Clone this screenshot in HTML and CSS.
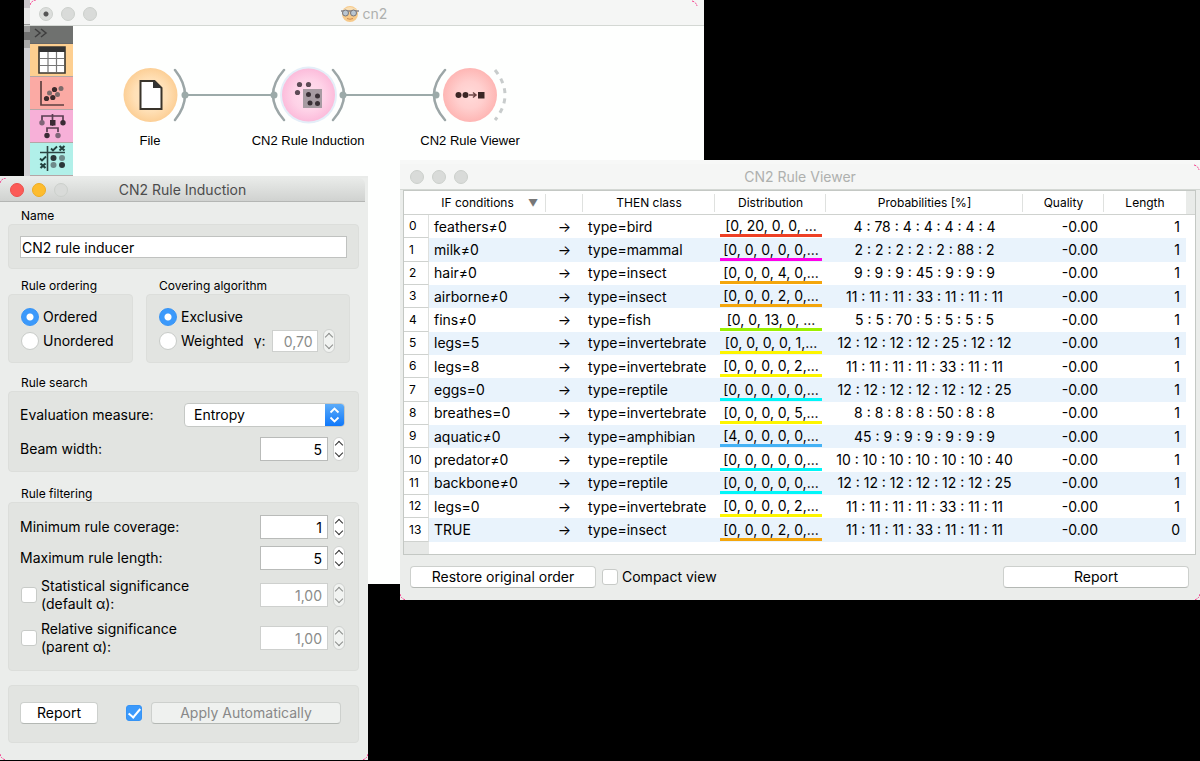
FILE: index.html
```html
<!DOCTYPE html>
<html lang="en">
<head>
<meta charset="utf-8">
<title>cn2</title>
<link rel="stylesheet" href="styles.css">
</head>
<body>
<main class="desktop">

<section class="window canvas-window" aria-label="cn2">
  <header class="titlebar inactive">
    <span class="lights"><i class="light edited"></i><i class="light"></i><i class="light"></i></span>
    <svg class="app-icon" viewBox="0 0 18 18" aria-hidden="true"><circle cx="9" cy="9" r="8" fill="#f6c98a"/><path d="M2 5q7-6 14 0" fill="#f9dfb4"/><path d="M0 6h18" stroke="#8a878c" stroke-width="1.500"/><circle cx="4.500" cy="8" r="3" fill="#b9c6d2" stroke="#77757b"/><circle cx="12.500" cy="8" r="3" fill="#b9c6d2" stroke="#77757b"/><path d="M6 13.500q3 1.500 6 0" stroke="#d08a4e" fill="none"/></svg>
    <h1 class="title">cn2</h1>
  </header>
  <div class="workspace">
    <i class="edge"></i>
    <nav class="toolbox" aria-label="Widget categories">
      <button class="tool expand" aria-label="Expand"><svg width="14" height="10" viewBox="0 0 14 10"><path d="M1 1l5 4-5 4M7 1l5 4-5 4" fill="none" stroke="#3e3e3e" stroke-width="1.500"/></svg></button>
      <button class="tool data" aria-label="Data"><svg width="28" height="28" viewBox="0 0 28 28"><path d="M1 1h26v26H1z" fill="#fff" stroke="#3a362f" stroke-width="1.600"/><path d="M1 1h26v5H1z" fill="#333"/><path d="M10 6v20M18.500 6v20M2 12.500h24M2 19.500h24" stroke="#777" stroke-width="1.200"/></svg></button>
      <button class="tool visualize" aria-label="Visualize"><svg width="28" height="28" viewBox="0 0 28 28"><path d="M3 2v24h23" fill="none" stroke="#5e4040" stroke-width="1.700"/><g fill="#7c6a6a"><circle cx="11.500" cy="14" r="2.500"/><circle cx="19.500" cy="15.500" r="2.500"/><circle cx="23" cy="9.500" r="2.500"/></g><g fill="#3c2a2c"><circle cx="16.500" cy="10.500" r="2.600"/><circle cx="8.500" cy="19.500" r="2.600"/><circle cx="14.800" cy="18.500" r="2.600"/></g></svg></button>
      <button class="tool model" aria-label="Model"><svg width="28" height="28" viewBox="0 0 28 28"><path d="M4 9V4h21v5M14.500 2v12M9 20v-4h11v4" fill="none" stroke="#5b3f52" stroke-width="1.700"/><path d="M12 8h5.500v5.500H12z" fill="#3a2a35"/><g fill="#3a2a35"><circle cx="25" cy="10.700" r="2.700"/><circle cx="9" cy="23.500" r="2.700"/></g><g fill="#7f6578"><circle cx="4" cy="10.700" r="2.700"/><circle cx="20" cy="23.500" r="2.700"/></g></svg></button>
      <button class="tool evaluate" aria-label="Evaluate"><svg width="28" height="28" viewBox="0 0 28 28"><path d="M2 7.500h25M9.500 1v25" fill="none" stroke="#2d4443" stroke-width="1.600"/><path d="M13 3.500l2 2 4-4M2 13.500l2 2 4-4" fill="none" stroke="#22403e" stroke-width="1.800"/><path d="M21.500 1l5 4.500M26.500 1l-5 4.500M2.500 18.500l5 4.500M7.500 18.500l-5 4.500" stroke="#22403e" stroke-width="2.200"/><g fill="#2a3739"><circle cx="15.500" cy="13" r="3"/><circle cx="24" cy="20" r="3"/></g><g fill="#6e8a8a"><circle cx="24" cy="13" r="3"/><circle cx="15.500" cy="20" r="3"/></g></svg></button>
    </nav>
    <div class="scheme">
      <svg class="links" width="440" height="70" viewBox="0 0 440 70" aria-hidden="true">
        <defs>
          <radialGradient id="orange"><stop offset="0" stop-color="#ffe9ca"/><stop offset=".6" stop-color="#ffe0b6"/><stop offset="1" stop-color="#fccf96"/></radialGradient>
          <radialGradient id="pink"><stop offset="0" stop-color="#ffe0ef"/><stop offset=".6" stop-color="#fed2e7"/><stop offset="1" stop-color="#fcbcdb"/></radialGradient>
          <radialGradient id="red"><stop offset="0" stop-color="#ffdad9"/><stop offset=".5" stop-color="#ffcfce"/><stop offset="1" stop-color="#feb6b4"/></radialGradient>
        </defs>
        <g stroke="#9caaa9" stroke-width="2"><path d="M111 35h89M269 35h93"/></g>
        <g fill="none" stroke="#9ca6a7" stroke-width="2.500" stroke-linecap="round">
          <path d="M101 10q20 25 0 50M210 10q-22 25 0 50M259 10q22 25 0 50M371 10q-22 25 0 50"/>
          <path d="M421 10q20 25 0 50" stroke="#c8cccc" stroke-width="3" stroke-linecap="butt" stroke-dasharray="5 5.300"/>
        </g>
        <g fill="#9caaa9"><circle cx="111" cy="35" r="3.500"/><circle cx="200" cy="35" r="3.500"/><circle cx="269" cy="35" r="3.500"/><circle cx="362" cy="35" r="3.500"/></g>
        <circle cx="76.500" cy="35" r="27" fill="url(#orange)"/>
        <circle cx="234.500" cy="35" r="28.500" fill="#e4eef8"/><circle cx="234.500" cy="35" r="26.500" fill="url(#pink)"/>
        <circle cx="396" cy="35" r="27" fill="url(#red)"/>
        <path d="M66.500 21h14l7 7v21h-21z" fill="#fff" stroke="#3a342b" stroke-width="2"/><path d="M79 20l9 8h-9z" fill="#333"/>
        <path d="M229 29h19v19h-19z" fill="#a79ba2"/>
        <g fill="#5d4b56"><circle cx="225.500" cy="24.500" r="2.600"/><circle cx="234.500" cy="24.500" r="2.600"/><circle cx="223.500" cy="32.500" r="2.600"/></g>
        <g fill="#3a3036"><circle cx="234.500" cy="34.500" r="2.500"/><circle cx="243.500" cy="36" r="2.500"/><circle cx="236" cy="43" r="2.500"/><circle cx="243.500" cy="43.500" r="2.500"/></g>
        <g fill="#3b2625"><circle cx="384.500" cy="35" r="3"/><circle cx="391.500" cy="35" r="3"/><path d="M404 32h6.500v6.500H404z"/></g><path d="M395 35h7M399 32.500l3 2.500-3 2.500" fill="none" stroke="#6b4444" stroke-width="1.500"/>
      </svg>
      <span class="node-label file">File</span>
      <span class="node-label induction">CN2 Rule Induction</span>
      <span class="node-label viewer">CN2 Rule Viewer</span>
    </div>
  </div>
  <svg class="corner inner-left" viewBox="0 0 6 6"><path d="M0 5q1-4 6-5" /></svg>
  <svg class="corner inner-right" viewBox="0 0 6 6"><path d="M0 1q4 1 5 5" /></svg>
</section>

<section class="window viewer-window" aria-label="CN2 Rule Viewer">
  <header class="titlebar inactive">
    <span class="lights"><i class="light"></i><i class="light"></i><i class="light"></i></span>
    <h2 class="title">CN2 Rule Viewer</h2>
  </header>
  <div class="table-frame">
    <table class="rules">
      <colgroup><col class="c-num"><col class="c-if"><col class="c-arrow"><col class="c-then"><col class="c-dist"><col class="c-prob"><col class="c-qual"><col class="c-len"><col></colgroup>
      <thead><tr><th></th><th class="sorted">IF conditions<span class="sort">▼</span></th><th></th><th>THEN class</th><th>Distribution</th><th>Probabilities [%]</th><th>Quality</th><th>Length</th><th class="rest"></th></tr></thead>
      <tbody>
      <tr><th>0</th><td>feathers≠0</td><td>→</td><td>type=bird</td><td><span class="dist bird">[0, 20, 0, 0, ...</span></td><td>4 : 78 : 4 : 4 : 4 : 4 : 4</td><td>-0.00</td><td>1</td><td></td></tr>
      <tr><th>1</th><td>milk≠0</td><td>→</td><td>type=mammal</td><td><span class="dist mammal">[0, 0, 0, 0, 0,...</span></td><td>2 : 2 : 2 : 2 : 2 : 88 : 2</td><td>-0.00</td><td>1</td><td></td></tr>
      <tr><th>2</th><td>hair≠0</td><td>→</td><td>type=insect</td><td><span class="dist insect">[0, 0, 0, 4, 0,...</span></td><td>9 : 9 : 9 : 45 : 9 : 9 : 9</td><td>-0.00</td><td>1</td><td></td></tr>
      <tr><th>3</th><td>airborne≠0</td><td>→</td><td>type=insect</td><td><span class="dist insect">[0, 0, 0, 2, 0,...</span></td><td>11 : 11 : 11 : 33 : 11 : 11 : 11</td><td>-0.00</td><td>1</td><td></td></tr>
      <tr><th>4</th><td>fins≠0</td><td>→</td><td>type=fish</td><td><span class="dist fish">[0, 0, 13, 0, ...</span></td><td>5 : 5 : 70 : 5 : 5 : 5 : 5</td><td>-0.00</td><td>1</td><td></td></tr>
      <tr><th>5</th><td>legs=5</td><td>→</td><td>type=invertebrate</td><td><span class="dist invertebrate">[0, 0, 0, 0, 1,...</span></td><td>12 : 12 : 12 : 12 : 25 : 12 : 12</td><td>-0.00</td><td>1</td><td></td></tr>
      <tr><th>6</th><td>legs=8</td><td>→</td><td>type=invertebrate</td><td><span class="dist invertebrate">[0, 0, 0, 0, 2,...</span></td><td>11 : 11 : 11 : 11 : 33 : 11 : 11</td><td>-0.00</td><td>1</td><td></td></tr>
      <tr><th>7</th><td>eggs=0</td><td>→</td><td>type=reptile</td><td><span class="dist reptile">[0, 0, 0, 0, 0,...</span></td><td>12 : 12 : 12 : 12 : 12 : 12 : 25</td><td>-0.00</td><td>1</td><td></td></tr>
      <tr><th>8</th><td>breathes=0</td><td>→</td><td>type=invertebrate</td><td><span class="dist invertebrate">[0, 0, 0, 0, 5,...</span></td><td>8 : 8 : 8 : 8 : 50 : 8 : 8</td><td>-0.00</td><td>1</td><td></td></tr>
      <tr><th>9</th><td>aquatic≠0</td><td>→</td><td>type=amphibian</td><td><span class="dist amphibian">[4, 0, 0, 0, 0,...</span></td><td>45 : 9 : 9 : 9 : 9 : 9 : 9</td><td>-0.00</td><td>1</td><td></td></tr>
      <tr><th>10</th><td>predator≠0</td><td>→</td><td>type=reptile</td><td><span class="dist reptile">[0, 0, 0, 0, 0,...</span></td><td>10 : 10 : 10 : 10 : 10 : 10 : 40</td><td>-0.00</td><td>1</td><td></td></tr>
      <tr><th>11</th><td>backbone≠0</td><td>→</td><td>type=reptile</td><td><span class="dist reptile">[0, 0, 0, 0, 0,...</span></td><td>12 : 12 : 12 : 12 : 12 : 12 : 25</td><td>-0.00</td><td>1</td><td></td></tr>
      <tr><th>12</th><td>legs=0</td><td>→</td><td>type=invertebrate</td><td><span class="dist invertebrate">[0, 0, 0, 0, 2,...</span></td><td>11 : 11 : 11 : 11 : 33 : 11 : 11</td><td>-0.00</td><td>1</td><td></td></tr>
      <tr><th>13</th><td>TRUE</td><td>→</td><td>type=insect</td><td><span class="dist insect">[0, 0, 0, 2, 0,...</span></td><td>11 : 11 : 11 : 33 : 11 : 11 : 11</td><td>-0.00</td><td>0</td><td></td></tr>
      </tbody>
    </table>
  </div>
  <footer class="viewer-footer">
    <button class="push wide">Restore original order</button>
    <label class="check"><input type="checkbox">Compact view</label>
    <button class="push wide end">Report</button>
  </footer>
  <svg class="corner top-right" viewBox="0 0 6 6"><path d="M0 1q4 1 5 5" /></svg>
  <svg class="corner bottom-left" viewBox="0 0 6 6"><path d="M0 0q1 5 6 6" /></svg>
  <svg class="corner bottom-right" viewBox="0 0 6 6"><path d="M6 0q-1 5-6 6" /></svg>
</section>

<section class="window induction-window" aria-label="CN2 Rule Induction">
  <header class="titlebar">
    <span class="lights"><i class="light close"></i><i class="light minimize"></i><i class="light"></i></span>
    <h2 class="title">CN2 Rule Induction</h2>
  </header>
  <form class="settings">
    <section class="group">
      <h3><label for="name">Name</label></h3>
      <div class="box name-box"><input class="text" id="name" type="text" value="CN2 rule inducer"></div>
    </section>
    <div class="pair">
      <section class="group ordering">
        <h3>Rule ordering</h3>
        <div class="box radios">
          <label class="radio"><input type="radio" name="order" checked>Ordered</label>
          <label class="radio"><input type="radio" name="order">Unordered</label>
        </div>
      </section>
      <section class="group covering">
        <h3>Covering algorithm</h3>
        <div class="box radios">
          <label class="radio"><input type="radio" name="cover" checked>Exclusive</label>
          <div class="weighted">
            <label class="radio"><input type="radio" name="cover">Weighted</label>
            <label class="gamma" for="gamma">γ:</label>
            <span class="spin small off"><input id="gamma" type="text" value="0,70" disabled><span class="stepper"><button type="button" aria-label="Increase" disabled></button><button type="button" aria-label="Decrease" disabled></button></span></span>
          </div>
        </div>
      </section>
    </div>
    <section class="group search">
      <h3>Rule search</h3>
      <div class="box fields search-fields">
        <div class="field"><label for="measure">Evaluation measure:</label>
          <span class="select"><select id="measure"><option>Entropy</option></select><svg width="19" height="22" viewBox="0 0 19 22" aria-hidden="true"><path d="M5.500 8.500l4-4 4 4M5.500 13.500l4 4 4-4" fill="none" stroke="#fff" stroke-width="1.800"/></svg></span></div>
        <div class="field"><label for="beam">Beam width:</label>
          <span class="spin"><input id="beam" type="text" value="5"><span class="stepper"><button type="button" aria-label="Increase"></button><button type="button" aria-label="Decrease"></button></span></span></div>
      </div>
    </section>
    <section class="group filtering">
      <h3>Rule filtering</h3>
      <div class="box fields filter-fields">
        <div class="field"><label for="cov">Minimum rule coverage:</label>
          <span class="spin"><input id="cov" type="text" value="1"><span class="stepper"><button type="button" aria-label="Increase"></button><button type="button" aria-label="Decrease"></button></span></span></div>
        <div class="field"><label for="len">Maximum rule length:</label>
          <span class="spin"><input id="len" type="text" value="5"><span class="stepper"><button type="button" aria-label="Increase"></button><button type="button" aria-label="Decrease"></button></span></span></div>
        <div class="field"><label class="check"><input type="checkbox"><span>Statistical significance<br>(default α):</span></label>
          <span class="spin off"><input aria-label="Default alpha" type="text" value="1,00" disabled><span class="stepper"><button type="button" aria-label="Increase" disabled></button><button type="button" aria-label="Decrease" disabled></button></span></span></div>
        <div class="field"><label class="check"><input type="checkbox"><span>Relative significance<br>(parent α):</span></label>
          <span class="spin off"><input aria-label="Parent alpha" type="text" value="1,00" disabled><span class="stepper"><button type="button" aria-label="Increase" disabled></button><button type="button" aria-label="Decrease" disabled></button></span></span></div>
      </div>
    </section>
    <div class="box actions">
      <button type="button" class="push report">Report</button>
      <input type="checkbox" class="auto" aria-label="Apply automatically" checked>
      <button type="button" class="push apply" disabled>Apply Automatically</button>
    </div>
  </form>
  <svg class="corner top-left" viewBox="0 0 6 6"><path d="M0 5q1-4 6-5" /></svg>
  <svg class="corner bottom-left" viewBox="0 0 6 6"><path d="M0 0q1 5 6 6" /></svg>
  <svg class="corner bottom-right" viewBox="0 0 6 6"><path d="M6 0q-1 5-6 6" /></svg>
</section>
</main>
</body>
</html>
```
FILE: styles.css
```css
* { box-sizing: border-box; }
body { margin: 0; background: #000; color: #000; font: 14px/18px Inter, Roboto, sans-serif; }
h1, h2, h3 { margin: 0; font-weight: 400; }
button, input, select { font: inherit; color: inherit; margin: 0; }
.desktop { position: relative; min-height: 100vh; overflow: hidden; }
.window { position: absolute; background: #ebedeb; }

.titlebar { position: relative; display: flex; align-items: center; justify-content: center; gap: 4px; height: 26px; background: linear-gradient(#e9ebe9, #d0d2d0); border-bottom: 1px solid #b4b6b4; color: #4c4c4c; }
.titlebar.inactive { background: #f5f6f5; border-color: #d4d8d4; color: #aeb0ae; }
.title { font-size: 14px; line-height: 20px; }
.lights { position: absolute; left: 10px; display: flex; gap: 8px; }
.light { width: 14px; height: 14px; border-radius: 50%; background: #d9dbd9; border: 1px solid #ccd0cc; }
.light.close { background: #fc5b57; border-color: #ec4f4b; }
.light.minimize { background: #fdbc2e; border-color: #eeac22; }
.light.edited { background: radial-gradient(circle, #555 2px, #dcdedc 3px); }

.canvas-window { left: 24px; top: 0; width: 680px; background: #fefffe; }
.canvas-window .titlebar { padding-top: 3px; background: linear-gradient(#c9c5c9 8px, #e8e8e8 8px 24px, #9a9a9a 24px) left / 6px 100% no-repeat #f5f6f5; }
.canvas-window .lights { left: 15px; }
.app-icon { width: 18px; height: 18px; }
.workspace { display: flex; height: 558px; }
.edge { width: 6px; height: 151px; background: linear-gradient(#9a9a9a 6px, #6f6f6f 6px 14px, #aaa 14px 22px, #d3d3d6 22px); }
.toolbox { display: flex; flex-direction: column; width: 43px; }
.tool { display: flex; align-items: center; justify-content: center; height: 33px; padding: 0; border: 0; border-bottom: 1px solid #b4a6a6; }
.tool.expand { height: 18px; justify-content: flex-start; align-items: flex-start; padding: 2px 4px; background: #6f716f; border-color: #666; }
.tool.data { background: #fdcf90; }
.tool.visualize { background: #fbaaa4; }
.tool.model { background: #f7b0d8; }
.tool.evaluate { background: #b1f0e9; }
.scheme { position: relative; flex: 1; margin-left: 1px; }
.links { position: absolute; left: 0; top: 34px; }
.node-label { position: absolute; top: 106px; transform: translateX(-50%); white-space: nowrap; font: 13px/18px "Liberation Sans", Arial, sans-serif; color: #000; }
.node-label.file { left: 76px; }
.node-label.induction { left: 234px; }
.node-label.viewer { left: 396px; }

.viewer-window { left: 400px; right: 0; top: 160px; border-top: 4px solid #f7f8f7; padding-bottom: 12px; }
.table-frame { margin: 0 4px 0 3px; border: 1px solid #c4c8c4; background: linear-gradient(90deg, #e6e8e6 25px, #fff 25px); height: 365px; }
.rules { width: 100%; height: 351px; table-layout: fixed; border-collapse: separate; border-spacing: 0; }
.rules th { font-weight: 400; padding: 0; }
.rules td { padding: 0 6px 0 5px; white-space: nowrap; }
.c-num { width: 25px; } .c-if { width: 117px; } .c-arrow { width: 37px; } .c-then { width: 132px; } .c-dist { width: 111px; } .c-prob { width: 197px; } .c-qual { width: 81px; } .c-len { width: 82px; }
.rules thead th { height: 24px; font-size: 12px; background: linear-gradient(#dfe1df, #dfe1df) right 3px / 1px 18px no-repeat #fff; border-bottom: 1px solid #cfd2cf; }
.rules thead th:first-child, .rules thead th:nth-child(8) { background: #fff; }
.rules thead .rest { background: #e9ebe9; }
.rules thead .sorted { position: relative; padding-right: 20px; }
.sort { position: absolute; right: 8px; color: #777; font-size: 10px; }
.rules tbody tr { background: #fff; }
.rules tbody tr:nth-child(even) td { background: #e9f3fc; }
.rules tbody tr td:last-child { background: #fff; }
.rules tbody th { font-size: 12px; text-align: left; padding-left: 5px; background: #fff; border-bottom: 1px solid #cfd2cf; border-right: 1px solid #dfe1df; }
.rules td:nth-child(3), .rules td:nth-child(5), .rules td:nth-child(6) { text-align: center; padding: 0; }
.rules td:nth-child(7), .rules td:nth-child(8) { text-align: right; }
.dist { display: block; margin: 0 4px 0 5px; height: 21px; line-height: 19px; border-bottom: 3px solid; }
.bird { border-color: #ee4025; } .mammal { border-color: #ff00e8; } .insect { border-color: #f4a60c; } .fish { border-color: #9cf000; } .invertebrate { border-color: #fdf500; } .reptile { border-color: #00f6f8; } .amphibian { border-color: #45b2f5; }
.viewer-footer { display: flex; align-items: center; gap: 6px; padding: 11px 11px 0 10px; }
.push { height: 22px; padding: 0 12px; border: 1px solid #cdd0cd; border-bottom-color: #b4b8b4; border-radius: 4px; background: #fff; color: #000; line-height: 20px; }
.push:disabled { background: #eff1ef; color: #888; }
.push.wide { width: 186px; }
.end { margin-left: auto; }
.check { display: flex; align-items: center; gap: 4px; }
input[type="checkbox"], input[type="radio"] { appearance: none; flex: none; width: 16px; height: 16px; background: #fff; border: 1px solid #c8cbc8; border-radius: 3px; }
input[type="radio"] { width: 18px; height: 18px; border-radius: 50%; }
input[type="radio"]:checked { border-color: #3593f5; background: radial-gradient(circle, #fff 3px, #3b99fb 4px); }
input[type="checkbox"]:checked { border-color: #3593f5; background: #3b99fb; display: grid; place-items: center; }
input[type="checkbox"]:checked::before { content: ""; width: 5px; height: 10px; margin-top: -3px; border: solid #fff; border-width: 0 2px 2px 0; transform: rotate(40deg); }

.induction-window { left: 0; top: 176px; width: 368px; padding-bottom: 17px; border-top: 2px solid #e9ebe9; }
.induction-window .titlebar { height: 24px; margin-right: 3px; border-radius: 0 6px 0 0; }
.settings { padding: 6px 9px 0 8px; }
.group h3 { font-size: 12px; line-height: 16px; padding-left: 13px; }
.box { background: #e2e4e1; border: 1px solid #dcdedb; border-radius: 4px; padding: 11px; }
.name-box { padding-bottom: 10px; }
.text { display: block; width: 100%; height: 22px; padding: 0 1px; background: #fff; border: 1px solid #c0c2c0; border-radius: 0; }
.pair { display: flex; gap: 13px; margin-top: 9px; padding-right: 9px; }
.ordering { width: 125px; }
.covering { flex: 1; }
.radios { padding: 10px 11px 9px 12px; }
.radio { display: flex; align-items: center; gap: 4px; height: 24px; }
.weighted { display: flex; align-items: center; height: 24px; }
.gamma { margin: 0 6px 0 10px; }
.search { margin-top: 12px; }
.filtering { margin-top: 14px; }
.fields { display: flex; flex-direction: column; gap: 7px; padding-right: 13px; }
.search-fields { gap: 10px; padding-bottom: 10px; }
.filter-fields { padding-top: 12px; padding-bottom: 14px; }
.field { display: flex; align-items: center; justify-content: space-between; min-height: 24px; }
.field .check { padding-left: 1px; }
.spin { display: flex; align-items: center; gap: 5px; }
.spin input { width: 68px; height: 24px; padding: 0 5px; text-align: right; background: #fff; border: 1px solid #b9bbb9; border-radius: 0; }
.spin.small input { width: 46px; height: 22px; padding: 0 4px; }
.spin.off input { border-color: #ced0ce; color: #8a8c8a; }
.stepper { display: flex; flex-direction: column; width: 12px; height: 24px; border: 1px solid #cfd1cf; border-radius: 6px; background: #fff; }
.off .stepper { background: #f1f3f1; }
.stepper button { flex: 1; display: grid; place-items: center; padding: 0; border: 0; background: none; color: #333; }
.off .stepper button { color: #8b8d8b; }
.stepper button::before { content: ""; width: 5px; height: 5px; border: solid currentColor; border-width: 1px 0 0 1px; margin-top: 3px; transform: rotate(45deg); }
.stepper button:last-child::before { margin: 0 0 3px; transform: rotate(225deg); }
.select { display: flex; width: 161px; height: 24px; border: 1px solid #c5c8c5; border-radius: 4px; background: #fff; overflow: hidden; }
.select select { appearance: none; flex: 1; min-width: 0; border: 0; background: none; padding: 0 9px; }
.select svg { background: linear-gradient(#5cacf9, #0f78fa); }
.actions { display: flex; align-items: center; margin-top: 14px; padding: 16px 17px 18px 11px; }
.report { width: 78px; }
.auto { margin: 0 9px 0 28px; }
.apply { flex: 1; }
.corner { position: absolute; width: 6px; height: 6px; fill: none; stroke: #f43d8c; stroke-width: 1; stroke-dasharray: 2 1; }
.top-left { left: 0; top: 0; } .top-right { right: 0; top: 0; } .bottom-left { left: 0; bottom: 0; } .bottom-right { right: 0; bottom: 0; }
.inner-left { left: 6px; top: 0; } .inner-right { right: 6px; top: 0; }
```
